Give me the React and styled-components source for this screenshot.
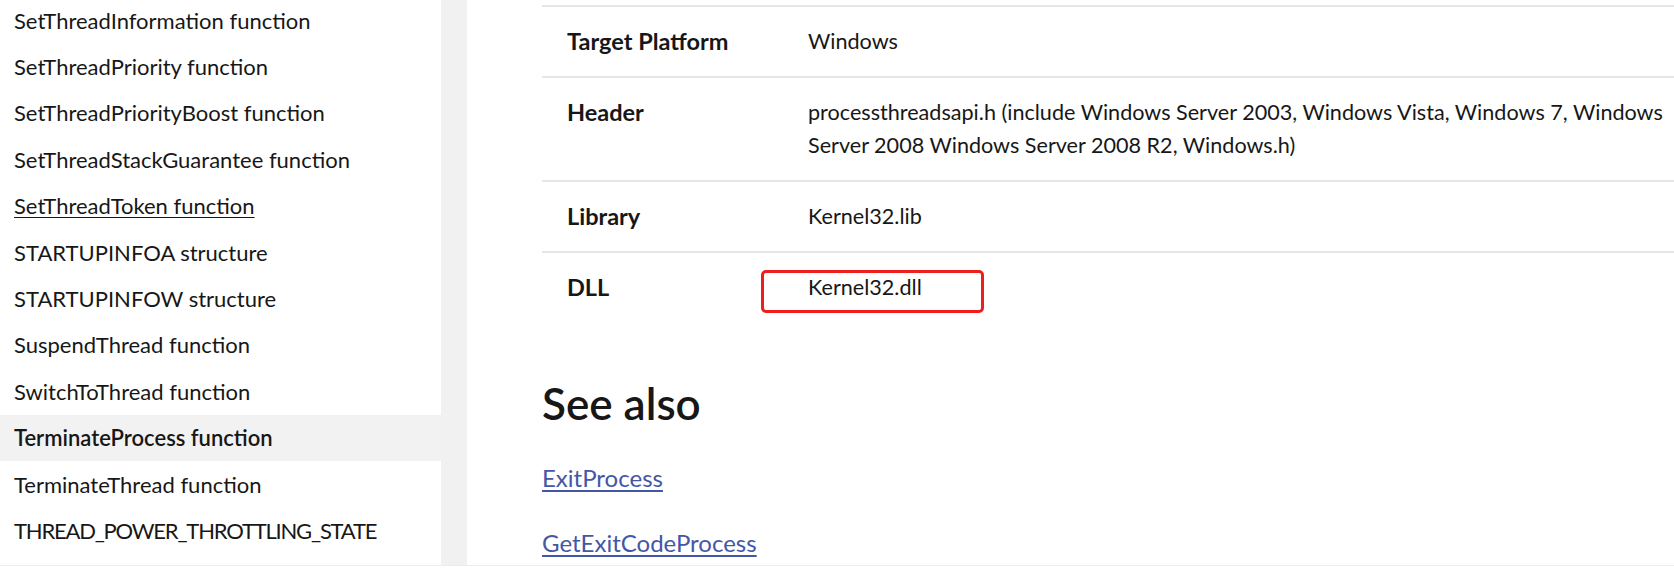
import React from "react"
import styled, { createGlobalStyle } from "styled-components"

const tocItems = [
    { id: 1, title: "SetThreadInformation function" },
    { id: 2, title: "SetThreadPriority function" },
    { id: 3, title: "SetThreadPriorityBoost function" },
    { id: 4, title: "SetThreadStackGuarantee function" },
    { id: 5, title: "SetThreadToken function", hover: true },
    { id: 6, title: "STARTUPINFOA structure" },
    { id: 7, title: "STARTUPINFOW structure" },
    { id: 8, title: "SuspendThread function" },
    { id: 9, title: "SwitchToThread function" },
    { id: 10, title: "TerminateProcess function", active: true },
    { id: 11, title: "TerminateThread function" },
    { id: 12, title: "THREAD_POWER_THROTTLING_STATE", caps: true },
    { id: 13, title: "TlsAlloc function" },
]

const requirements = [
    { label: "Target Platform", value: "Windows" },
    {
        label: "Header",
        value: "processthreadsapi.h (include Windows Server 2003, Windows Vista, Windows 7, Windows Server 2008 Windows Server 2008 R2, Windows.h)",
    },
    { label: "Library", value: "Kernel32.lib" },
    { label: "DLL", value: "Kernel32.dll", marked: true },
]

const seeAlso = ["ExitProcess", "GetExitCodeProcess"]

function App() {
    return (
        <>
            <GlobalStyle />
            <Page>
                <Layout>
                    <Sidebar>
                        <TocList>
                            {tocItems.map((item) => (
                                <TocItem key={item.id} $active={item.active} $caps={item.caps}>
                                    <TocLink $hover={item.hover}>{item.title}</TocLink>
                                </TocItem>
                            ))}
                        </TocList>
                    </Sidebar>
                    <ScrollTrack />
                    <Main>
                        <Table>
                            <tbody>
                                {requirements.map((row) => (
                                    <Row key={row.label}>
                                        <LabelCell>{row.label}</LabelCell>
                                        <ValueCell>
                                            {row.marked && <Marker />}
                                            {row.value}
                                        </ValueCell>
                                    </Row>
                                ))}
                            </tbody>
                        </Table>
                        <Heading>See also</Heading>
                        {seeAlso.map((name) => (
                            <LinkLine key={name}>
                                <DocLink href="#">{name}</DocLink>
                            </LinkLine>
                        ))}
                    </Main>
                </Layout>
                <BottomStrip />
            </Page>
        </>
    )
}

export default App

//styled components
const GlobalStyle = createGlobalStyle`
    html, body {
        margin: 0;
        padding: 0;
        background: #fff;
    }
    body {
        font-family: Lato, "Liberation Sans", sans-serif;
        color: #171717;
    }
`
const Page = styled.div`
    width: 1674px;
    height: 581px;
    overflow: hidden;
    display: flex;
    flex-direction: column;
`
const Layout = styled.div`
    display: flex;
    height: 565px;
    overflow: hidden;
    border-bottom: 1px solid #ececec;
    background: #fefefe;
`
const Sidebar = styled.nav`
    width: 441px;
    flex-shrink: 0;
    overflow: hidden;
    background: #fff;
`
const TocList = styled.ul`
    list-style: none;
    margin: -3px 0 0;
    padding: 0;
`
const TocItem = styled.li`
    height: 46.4px;
    display: flex;
    align-items: center;
    padding-left: 14px;
    font-size: 22px;
    white-space: nowrap;
    background: ${(p) => (p.$active ? "#f2f2f2" : "transparent")};
    font-weight: ${(p) => (p.$active ? 600 : 400)};
    letter-spacing: ${(p) => (p.$caps ? "-1.2px" : "0")};
    color: #171717;
`
const TocLink = styled.span`
    text-decoration: ${(p) => (p.$hover ? "underline" : "none")};
    text-underline-offset: 3px;
    text-decoration-thickness: 1px;
`
const ScrollTrack = styled.div`
    width: 26px;
    flex-shrink: 0;
    background: #f1f1f1;
`
const Main = styled.main`
    flex: 1;
    padding-left: 75px;
    overflow: hidden;
    background: #fff;
`
const Table = styled.table`
    width: 1220px;
    border-collapse: collapse;
    margin-top: 5px;
    font-size: 21.6px;
    line-height: 33px;
`
const Row = styled.tr`
    border-top: 2px solid #e6e6e6;
    &:last-child td {
        padding-bottom: 20px;
    }
`
const LabelCell = styled.td`
    width: 191px;
    padding: 18px 25px;
    font-size: 23.5px;
    font-weight: 700;
    vertical-align: top;
`
const ValueCell = styled.td`
    position: relative;
    padding: 18px 84px 18px 25px;
    vertical-align: top;
`
const Marker = styled.span`
    position: absolute;
    left: -22px;
    top: 17px;
    width: 217px;
    height: 37px;
    border: 3px solid #f01d1d;
    border-radius: 5px;
`
const Heading = styled.h2`
    margin: 55px 0 0;
    font-size: 44px;
    line-height: 48px;
    font-weight: 600;
    color: #171717;
`
const LinkLine = styled.p`
    margin: 32px 0 0;
    font-size: 24px;
    line-height: 33px;
    &:nth-of-type(1) {
        margin-top: 34px;
    }
`
const DocLink = styled.a`
    color: #4357a6;
    text-decoration: underline;
    text-underline-offset: 3px;
`
const BottomStrip = styled.div`
    flex: 1;
    background: #fff;
`
